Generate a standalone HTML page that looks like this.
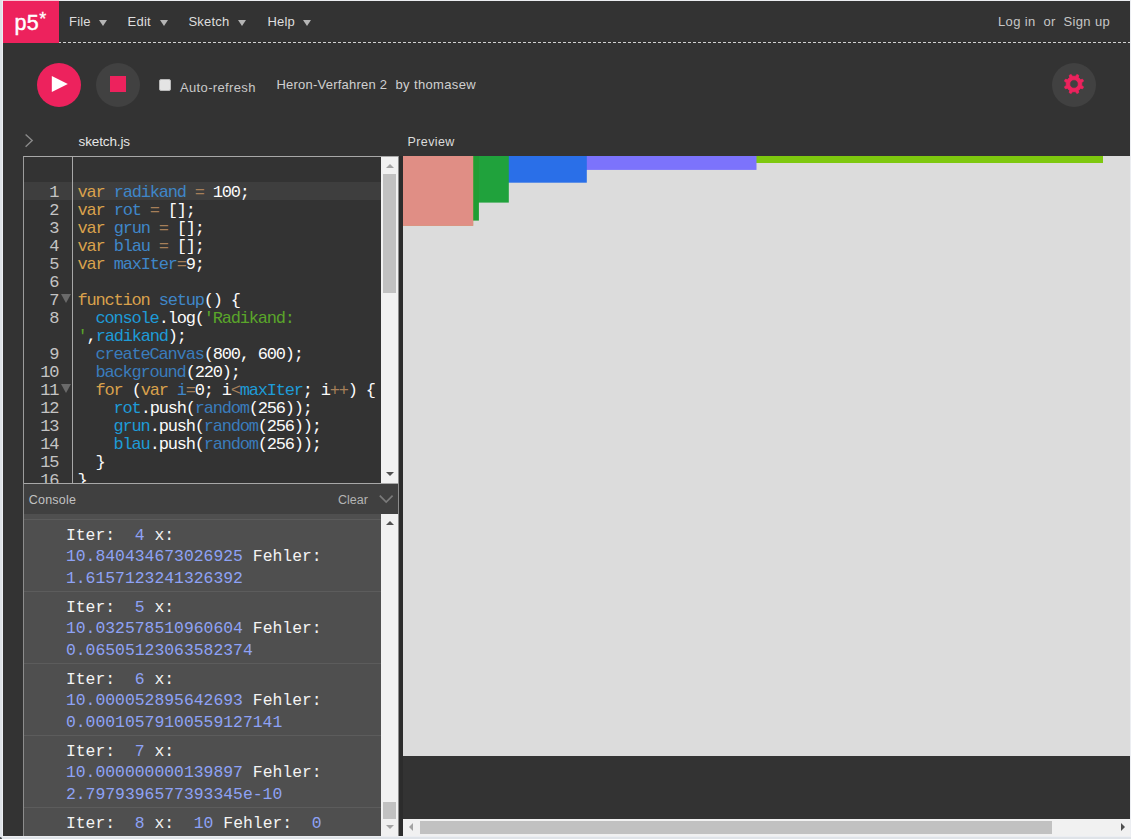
<!DOCTYPE html>
<html>
<head>
<meta charset="utf-8">
<title>p5.js Web Editor</title>
<style>
*{box-sizing:border-box;margin:0;padding:0}
html,body{width:1131px;height:839px;overflow:hidden;background:#dfe3e8}
body{font-family:"Liberation Sans",sans-serif;position:relative;color:#e0e0e0}
.abs{position:absolute}
#app{position:absolute;left:3px;top:1px;width:1127px;height:835px;background:#333;overflow:hidden;box-shadow:0 0 0 1px #eceef2}
/* all children of #app positioned relative to page coords via offset wrapper */
#pg{position:absolute;left:-3px;top:-1px;width:1131px;height:839px}
#logo{left:3px;top:1px;width:56px;height:42px;background:#ed225d}
#logo span{position:absolute;color:#fff;line-height:24px}
#logo .a{left:11.5px;top:10.4px;font-size:21.5px;letter-spacing:0.2px;-webkit-text-stroke:0.45px #fff}
#logo .b{left:36.2px;top:6.3px;font-size:18px;-webkit-text-stroke:0.3px #fff}
#dash{left:59px;top:42px;width:1071px;height:1px;background:repeating-linear-gradient(90deg,#d2d2d2 0,#d2d2d2 3.2px,transparent 3.2px,transparent 5px);background-position:-1px 0}
.nav{top:14px;font-size:13px;line-height:16px;color:#dedede;white-space:nowrap;letter-spacing:0.2px}
.nav.r{letter-spacing:0.35px;color:#c6c6c6}
.tri{width:0;height:0;border-left:4.2px solid transparent;border-right:4.2px solid transparent;border-top:6px solid #b5b5b5;top:20px}
.circ{width:44px;height:44px;border-radius:50%;top:63px}
.tb{font-size:13px;line-height:16px;white-space:nowrap;color:#c9c9c9}
.mono{font-family:"Liberation Mono",monospace}

.ln{left:0;width:34.3px;margin-top:2.1px;text-align:right;font-size:17px;letter-spacing:-1.2px;line-height:18px;color:#c4c4c4;height:18px}
.fold{left:37.2px;margin-top:-0.9px;width:0;height:0;border-left:5.5px solid transparent;border-right:5.5px solid transparent;border-top:9.8px solid #6a6a6a}
.cl{left:53.6px;margin-top:2.1px;font-size:17px;letter-spacing:-1.2px;line-height:18px;color:#fbfbfb;height:18px;white-space:pre}
.k{color:#d9a14c}.d{color:#3f86c8}.v{color:#1e9bd7}.o{color:#a67f59}.s{color:#5aa52a}.f{color:#3a7cbc}
.chd{font-size:12.5px;line-height:16px;color:#c2c2c2}
.cm{left:41.9px;font-size:16.4px;line-height:21.6px;color:#f4f4f4;white-space:pre;height:21.6px}
.n{color:#8ea2f5}
</style>
</head>
<body>
<div class="abs" style="left:3px;top:0;width:56px;height:1px;background:#f9c9d8;z-index:3"></div>
<div class="abs" style="left:-2.5px;top:836.8px;width:4px;height:4px;border-radius:50%;background:#40444a"></div>
<div id="app"><div id="pg">

<!-- NAV -->
<div id="logo" class="abs"><span class="a">p5</span><span class="b">*</span></div>
<div id="dash" class="abs"></div>
<div class="abs nav" style="left:69px">File</div><div class="abs tri" style="left:98.5px"></div>
<div class="abs nav" style="left:127.6px">Edit</div><div class="abs tri" style="left:160.2px"></div>
<div class="abs nav" style="left:188.5px">Sketch</div><div class="abs tri" style="left:238.3px"></div>
<div class="abs nav" style="left:267.5px">Help</div><div class="abs tri" style="left:303.3px"></div>
<div class="abs nav r" style="left:998px">Log in</div>
<div class="abs nav r" style="left:1043.5px">or</div>
<div class="abs nav r" style="left:1063.5px">Sign up</div>

<!-- TOOLBAR -->
<div class="abs circ" style="left:37px;background:#ed225d"></div>
<svg class="abs" style="left:51px;top:75px" width="18" height="18" viewBox="0 0 18 18"><path d="M0.8 0.9 L16.8 9 L0.8 17.1 Z" fill="#fff"/></svg>
<div class="abs circ" style="left:96px;background:#414141"></div>
<div class="abs" style="left:110px;top:76px;width:16px;height:16px;background:#ed225d"></div>
<div class="abs" style="left:159px;top:79px;width:12px;height:12px;background:#e4e4e4;border:1px solid #b8b8b8;border-radius:2px"></div>
<div class="abs tb" style="left:180px;top:80px;letter-spacing:0.35px">Auto-refresh</div>
<div class="abs tb" style="left:276.5px;top:77px;color:#d0d0d0;letter-spacing:0.22px">Heron-Verfahren 2</div>
<div class="abs tb" style="left:395.5px;top:77px;color:#d0d0d0;letter-spacing:0.36px">by thomasew</div>
<div class="abs circ" style="left:1052px;background:#414141"></div>
<svg id="gear" class="abs" style="left:1061.9px;top:71.8px" width="24" height="24" viewBox="-12 -12 24 24"><path d="M1.58 -7.74 L2.81 -9.49 L4.72 -8.70 L4.36 -6.59 L6.59 -4.36 L8.70 -4.72 L9.49 -2.81 L7.74 -1.58 L7.74 1.58 L9.49 2.81 L8.70 4.72 L6.59 4.36 L4.36 6.59 L4.72 8.70 L2.81 9.49 L1.58 7.74 L-1.58 7.74 L-2.81 9.49 L-4.72 8.70 L-4.36 6.59 L-6.59 4.36 L-8.70 4.72 L-9.49 2.81 L-7.74 1.58 L-7.74 -1.58 L-9.49 -2.81 L-8.70 -4.72 L-6.59 -4.36 L-4.36 -6.59 L-4.72 -8.70 L-2.81 -9.49 L-1.58 -7.74 Z M4.3 0 A4.3 4.3 0 1 0 -4.3 0 A4.3 4.3 0 1 0 4.3 0 Z" fill="#ed225d" fill-rule="evenodd" stroke="#ed225d" stroke-width="0.8" stroke-linejoin="round"/></svg>

<!-- EDITOR HEADER -->
<svg class="abs" style="left:23px;top:132px" width="12" height="17" viewBox="0 0 12 17"><path d="M2.6 2.4 L9.2 8.6 L2.6 14.8" fill="none" stroke="#8a8a8a" stroke-width="1.4"/></svg>
<div class="abs" style="left:78.5px;top:133.6px;font-size:13.5px;letter-spacing:-0.12px;line-height:16px;color:#e6e6e6">sketch.js</div>
<div class="abs" style="left:407.5px;top:134px;font-size:12.5px;letter-spacing:0.4px;line-height:16px;color:#dcdcdc">Preview</div>

<!-- EDITOR -->
<div id="editor" class="abs" style="left:23px;top:156px;width:375px;height:327px;border-left:1px solid #9c9c9c;border-top:1px solid #a8a8a8;overflow:hidden">
<div class="abs" style="left:0;top:25px;width:357px;height:18px;background:#3e3e3e"></div>
<div class="abs" style="left:48px;top:0;width:1px;height:330px;background:#a8a8a8"></div>
<div class="abs ln mono" style="top:25px">1</div>
<pre class="abs cl mono" style="top:25px"><span class="k">var</span> <span class="d">radikand</span> <span class="o">=</span> 100;</pre>
<div class="abs ln mono" style="top:43px">2</div>
<pre class="abs cl mono" style="top:43px"><span class="k">var</span> <span class="d">rot</span> <span class="o">=</span> [];</pre>
<div class="abs ln mono" style="top:61px">3</div>
<pre class="abs cl mono" style="top:61px"><span class="k">var</span> <span class="d">grun</span> <span class="o">=</span> [];</pre>
<div class="abs ln mono" style="top:79px">4</div>
<pre class="abs cl mono" style="top:79px"><span class="k">var</span> <span class="d">blau</span> <span class="o">=</span> [];</pre>
<div class="abs ln mono" style="top:97px">5</div>
<pre class="abs cl mono" style="top:97px"><span class="k">var</span> <span class="d">maxIter</span><span class="o">=</span>9;</pre>
<div class="abs ln mono" style="top:115px">6</div>
<div class="abs ln mono" style="top:133px">7</div>
<div class="abs fold" style="top:138px"></div>
<pre class="abs cl mono" style="top:133px"><span class="k">function</span> <span class="d">setup</span>() {</pre>
<div class="abs ln mono" style="top:151px">8</div>
<pre class="abs cl mono" style="top:151px">  <span class="v">console</span>.log(<span class="s">'Radikand:</span></pre>
<pre class="abs cl mono" style="top:169px"><span class="s">'</span>,<span class="v">radikand</span>);</pre>
<div class="abs ln mono" style="top:187px">9</div>
<pre class="abs cl mono" style="top:187px">  <span class="f">createCanvas</span>(800, 600);</pre>
<div class="abs ln mono" style="top:205px">10</div>
<pre class="abs cl mono" style="top:205px">  <span class="f">background</span>(220);</pre>
<div class="abs ln mono" style="top:223px">11</div>
<div class="abs fold" style="top:228px"></div>
<pre class="abs cl mono" style="top:223px">  <span class="k">for</span> (<span class="k">var</span> <span class="d">i</span><span class="o">=</span>0; i<span class="o">&lt;</span><span class="v">maxIter</span>; i<span class="o">++</span>) {</pre>
<div class="abs ln mono" style="top:241px">12</div>
<pre class="abs cl mono" style="top:241px">    <span class="v">rot</span>.push(<span class="f">random</span>(256));</pre>
<div class="abs ln mono" style="top:259px">13</div>
<pre class="abs cl mono" style="top:259px">    <span class="v">grun</span>.push(<span class="f">random</span>(256));</pre>
<div class="abs ln mono" style="top:277px">14</div>
<pre class="abs cl mono" style="top:277px">    <span class="v">blau</span>.push(<span class="f">random</span>(256));</pre>
<div class="abs ln mono" style="top:295px">15</div>
<pre class="abs cl mono" style="top:295px">  }</pre>
<div class="abs ln mono" style="top:313px">16</div>
<pre class="abs cl mono" style="top:313px">}</pre>
<div class="abs" style="left:357px;top:0;width:17px;height:330px;background:#f1f1f1"></div>
<div class="abs" style="left:359px;top:17px;width:13px;height:119px;background:#c1c1c1"></div>
<div class="abs" style="left:361.6px;top:6.6px;width:0;height:0;border-left:4.7px solid transparent;border-right:4.7px solid transparent;border-bottom:4.5px solid #a3a3a3"></div>
<div class="abs" style="left:361.6px;top:315px;width:0;height:0;border-left:4.7px solid transparent;border-right:4.7px solid transparent;border-top:4.5px solid #505050"></div>
</div>

<!-- CONSOLE -->
<div id="console" class="abs" style="left:23px;top:483px;width:375px;height:353px;border-left:1px solid #8c8c8c;border-top:1px solid #a8a8a8;overflow:hidden">
<div class="abs" style="left:0;top:0;width:375px;height:30px;background:#404040"></div>
<div class="abs chd" style="left:4.8px;top:8px;letter-spacing:0.2px">Console</div>
<div class="abs chd" style="left:314px;top:8px;color:#b4b4b4">Clear</div>
<svg class="abs" style="left:354px;top:9px" width="18" height="12" viewBox="0 0 18 12"><path d="M1.8 2.7 L8.2 9.1 L14.6 2.7" fill="none" stroke="#7a7a7a" stroke-width="1.7"/></svg>
<div class="abs" style="left:0;top:30px;width:357px;height:323px;background:#4f4f4f"></div>
<div class="abs" style="left:0;top:35px;width:357px;height:1px;background:#5c5c5c"></div>
<div class="abs" style="left:0;top:107px;width:357px;height:1px;background:#5c5c5c"></div>
<pre class="abs cm mono" style="top:40.6px">Iter:  <span class="n">4</span> x: </pre>
<pre class="abs cm mono" style="top:62.2px"><span class="n">10.840434673026925</span> Fehler: </pre>
<pre class="abs cm mono" style="top:83.8px"><span class="n">1.6157123241326392</span></pre>
<div class="abs" style="left:0;top:179px;width:357px;height:1px;background:#5c5c5c"></div>
<pre class="abs cm mono" style="top:112.6px">Iter:  <span class="n">5</span> x: </pre>
<pre class="abs cm mono" style="top:134.2px"><span class="n">10.032578510960604</span> Fehler: </pre>
<pre class="abs cm mono" style="top:155.8px"><span class="n">0.06505123063582374</span></pre>
<div class="abs" style="left:0;top:251px;width:357px;height:1px;background:#5c5c5c"></div>
<pre class="abs cm mono" style="top:184.6px">Iter:  <span class="n">6</span> x: </pre>
<pre class="abs cm mono" style="top:206.2px"><span class="n">10.000052895642693</span> Fehler: </pre>
<pre class="abs cm mono" style="top:227.8px"><span class="n">0.00010579100559127141</span></pre>
<div class="abs" style="left:0;top:323px;width:357px;height:1px;background:#5c5c5c"></div>
<pre class="abs cm mono" style="top:256.6px">Iter:  <span class="n">7</span> x: </pre>
<pre class="abs cm mono" style="top:278.2px"><span class="n">10.000000000139897</span> Fehler: </pre>
<pre class="abs cm mono" style="top:299.8px"><span class="n">2.7979396577393345e-10</span></pre>
<div class="abs" style="left:0;top:395px;width:357px;height:1px;background:#5c5c5c"></div>
<pre class="abs cm mono" style="top:328.6px">Iter:  <span class="n">8</span> x:  <span class="n">10</span> Fehler:  <span class="n">0</span></pre>
<div class="abs" style="left:357px;top:30px;width:17px;height:322px;background:#f1f1f1"></div>
<div class="abs" style="left:359px;top:318px;width:13px;height:17px;background:#c1c1c1"></div>
<div class="abs" style="left:361.6px;top:36.8px;width:0;height:0;border-left:4.7px solid transparent;border-right:4.7px solid transparent;border-bottom:4.5px solid #505050"></div>
<div class="abs" style="left:361.6px;top:341px;width:0;height:0;border-left:4.7px solid transparent;border-right:4.7px solid transparent;border-top:4.5px solid #a3a3a3"></div>
</div>

<div class="abs" style="left:398px;top:156px;width:1px;height:680px;background:#8c8c8c"></div>
<div class="abs" style="left:399px;top:156px;width:4px;height:680px;background:#2c2c2c"></div>
<!-- PREVIEW -->
<div id="preview" class="abs" style="left:403px;top:156px;width:727px;height:680px;overflow:hidden">
<div class="abs" style="left:0;top:0;width:727px;height:600px;background:#dcdcdc"></div>
<svg class="abs" style="left:0;top:0" width="727" height="80" viewBox="0 0 727 80"><rect x="0" y="0" width="700" height="7" fill="#7ec80f"/><rect x="0" y="0" width="353.5" height="13.9" fill="#7c73fc"/><rect x="0" y="0" width="183.8" height="26.7" fill="#2a6fe8"/><rect x="0" y="0" width="105.8" height="46.6" fill="#20a23c"/><rect x="0" y="0" width="75.9" height="64.6" fill="#1f9d33"/><rect x="0" y="0" width="70.3" height="69.8" fill="#b9a05a"/><rect x="0" y="0" width="70" height="69.8" fill="#e08e85"/></svg>
<div class="abs" style="left:0;top:663px;width:727px;height:17px;background:#f1f1f1"></div>
<div class="abs" style="left:17px;top:665px;width:632px;height:13px;background:#c1c1c1"></div>
<div class="abs" style="left:6px;top:666.8px;width:0;height:0;border-top:4.7px solid transparent;border-bottom:4.7px solid transparent;border-right:4.5px solid #a3a3a3"></div>
<div class="abs" style="left:718px;top:666.8px;width:0;height:0;border-top:4.7px solid transparent;border-bottom:4.7px solid transparent;border-left:4.5px solid #505050"></div>
</div>

</div></div>
</body>
</html>
